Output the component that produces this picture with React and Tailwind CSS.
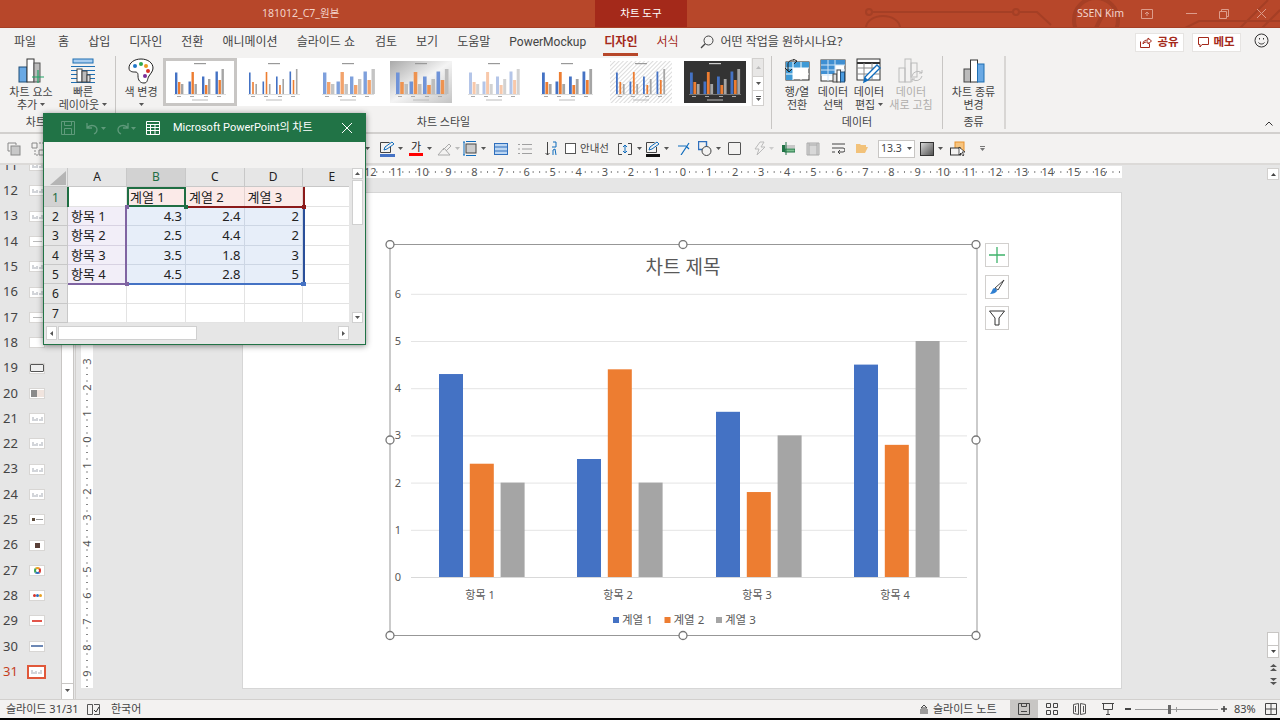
import React from 'react';

const series = [
  [4.3, 2.5, 3.5, 4.5],
  [2.4, 4.4, 1.8, 2.8],
  [2, 2, 3, 5],
];
const barColors = ['#4472c4', '#ed7d31', '#a5a5a5'];

const Caret = ({ className = '', color = '#555' }) => (
  <svg width="5" height="3" viewBox="0 0 5 3" className={`shrink-0 ${className}`}>
    <path d="M0 0h5L2.5 3z" fill={color} />
  </svg>
);

// Small chart used for every style in the gallery
const MiniChart = ({ variant }) => {
  const looks = {
    plain: { bg: '#fff', w: 2.4, colors: barColors, gap: 0 },
    thin: { bg: '#fff', w: 1.6, colors: barColors, gap: 1 },
    stack: { bg: '#fff', w: 3.4, colors: ['#7ea0dc', '#f2a36c', '#c4c4c4'], gap: 0 },
    gray: { bg: 'url(#miniGray)', w: 3.6, colors: ['#6f93d8', '#ee9350', '#bdbdbd'], gap: 0 },
    pale: { bg: '#fff', w: 3, colors: ['#b4c5e8', '#f8c8aa', '#d2d2d2'], gap: 0 },
    solid: { bg: '#fff', w: 2.8, colors: barColors, gap: 0 },
    hatch: { bg: 'url(#miniHatch)', w: 1.8, colors: barColors, gap: 1 },
    dark: { bg: '#333', w: 2.8, colors: ['#4472c4', '#ed7d31', '#a5a5a5'], gap: 0 },
  };
  const look = looks[variant];
  return (
    <svg width="62" height="42" viewBox="0 0 62 42">
      <defs>
        <linearGradient id="miniGray" x1="0" y1="0" x2="1" y2="1">
          <stop offset="0" stopColor="#a9a9a9" />
          <stop offset="0.5" stopColor="#f4f4f4" />
          <stop offset="1" stopColor="#c4c4c4" />
        </linearGradient>
        <pattern id="miniHatch" width="3" height="3" patternUnits="userSpaceOnUse" patternTransform="rotate(45)">
          <rect width="3" height="3" fill="#fff" />
          <rect width="1" height="3" fill="#dcdcdc" />
        </pattern>
      </defs>
      <rect width="62" height="42" fill={look.bg} />
      <rect x="25" y="2" width="12" height="1.2" fill={variant === 'dark' ? '#ccc' : '#999'} />
      {series.map((row, s) =>
        row.map((v, c) => (
          <rect
            key={`${s}${c}`}
            x={6 + c * 13.5 + s * (look.w + look.gap + 0.6)}
            y={33 - v * 5}
            width={look.w}
            height={v * 5}
            fill={look.colors[s]}
          />
        ))
      )}
      <rect x="5" y="33" width="52" height="0.5" fill="#bbb" />
      {[8, 21, 35, 48].map((x) => (
        <rect key={x} x={x} y="35" width="4" height="1" fill="#aaa" />
      ))}
      <rect x="23" y="38.5" width="16" height="1" fill="#bbb" />
    </svg>
  );
};

const TitleBar = () => (
  <div className="relative h-[28px] shrink-0 flex items-center bg-[#b7472a] border-b border-[#a63f25] text-[10.5px] text-[#f3d3ca] overflow-hidden">
    <svg className="absolute right-0 top-0" width="415" height="28" viewBox="865 0 415 28" fill="none" stroke="#a53f25" strokeWidth="2">
      <circle cx="869" cy="12" r="3" />
      <circle cx="1016" cy="12" r="3" />
      <path d="M872 12h141M1019 12h18l14 13M866 28a17 12 0 0 1 34 0" />
      <circle cx="1096" cy="20" r="22" strokeWidth="4" />
      <path d="M1086 12h18l-8 16" strokeWidth="4" />
      <path d="M1185 28l14-7h81M1240 28l28-28M1262 28l18-18" />
    </svg>
    <span className="ml-[262px] w-[333px] relative">181012_C7_원본</span>
    <div className="relative w-[92px] h-[27px] bg-[#a4291a] text-white flex items-center justify-center">차트 도구</div>
    <span className="relative ml-[390px] w-[64px] text-[10.5px]">SSEN Kim</span>
    <svg className="relative" width="12" height="10" viewBox="0 0 12 10" fill="none" stroke="#dd9c8b"><path d="M.5.5h11v9H.5zM6 7V3M4 5l2-2 2 2" /></svg>
    <div className="relative ml-[33px] w-[11px] h-px bg-[#dd9c8b]" />
    <svg className="relative ml-[22px]" width="10" height="10" viewBox="0 0 10 10" fill="none" stroke="#dd9c8b"><path d="M.5 2.5h7v7h-7zM2.5 2.5v-2h7v7h-2" /></svg>
    <svg className="relative ml-[28px]" width="9" height="9" viewBox="0 0 9 9" stroke="#dd9c8b"><path d="M0 0l9 9M9 0L0 9" /></svg>
  </div>
);

const TabBar = () => (
  <div className="h-[28px] shrink-0 flex items-center pl-[14px] gap-[19px] bg-[#f3f2f1] text-[12px] text-[#444] whitespace-nowrap">
    <span className="mr-[3px]">파일</span>
    <span>홈</span>
    <span>삽입</span>
    <span>디자인</span>
    <span>전환</span>
    <span>애니메이션</span>
    <span>슬라이드 쇼</span>
    <span className="ml-[1px]">검토</span>
    <span>보기</span>
    <span>도움말</span>
    <span className="w-[76px] font-['Roboto',sans-serif]">PowerMockup</span>
    <span className="relative font-bold text-[#a4291a]">
      디자인
      <span className="absolute left-[-1px] right-[-1px] bottom-[-5px] h-[3px] bg-[#b7472a]" />
    </span>
    <span className="text-[#a4291a]">서식</span>
    <div className="flex items-center gap-[7px] ml-[2px]">
      <svg width="14" height="14" viewBox="0 0 14 14" fill="none" stroke="#444"><circle cx="8.5" cy="5.5" r="4.5" /><path d="M5.2 8.8L1 13" strokeWidth="1.3" /></svg>
      <span>어떤 작업을 원하시나요?</span>
    </div>
    <div className="ml-auto mr-[39px] flex items-center gap-[8px]">
      <div className="w-[49px] h-[19px] bg-white border border-[#e6e4e2] flex items-center justify-center gap-[5px] text-[11.5px] font-bold text-[#a4291a]">
        <svg width="12" height="11" viewBox="0 0 12 11" fill="none" stroke="#a4291a"><path d="M.5 4.5v6h9v-4M3 7c0-3 2-4 5-4V1l3.5 3L8 7V5C6 5 4 5 3 7z" /></svg>
        공유
      </div>
      <div className="w-[49px] h-[19px] bg-white border border-[#e6e4e2] flex items-center justify-center gap-[4px] text-[11.5px] font-bold text-[#a4291a]">
        <svg width="11" height="11" viewBox="0 0 11 11" fill="none" stroke="#a4291a"><path d="M.5.5h10v7H4l-2 2.5v-2.5H.5z" /></svg>
        메모
      </div>
    </div>
    <svg className="absolute right-[11px] top-[33px]" width="15" height="15" viewBox="0 0 15 15" fill="none" stroke="#333"><circle cx="7.5" cy="7.5" r="6.5" /><path d="M4.5 9.5c1.5 2 4.5 2 6 0M5.5 5v1.5M9.5 5v1.5" /></svg>
  </div>
);

const ChartAddIcon = () => (
  <svg width="26" height="26" viewBox="0 0 26 26">
    <rect x="1" y="9" width="8" height="15" fill="#6aa9e4" stroke="#1f4e79" />
    <rect x="9" y="1" width="7" height="23" fill="#fff" stroke="#333" />
    <rect x="16" y="5" width="6" height="19" fill="#bbb" stroke="#555" />
    <path d="M20 12v13M14 19h12" stroke="#21a366" strokeWidth="1.2" />
  </svg>
);

const QuickLayoutIcon = () => (
  <svg width="26" height="26" viewBox="0 0 26 26">
    <rect x="3" y="1" width="20" height="4" fill="#a8cdf0" stroke="#1f6fb2" />
    <path d="M1 8.5h24M1 12.5h24M1 16.5h24M1 20.5h24M1 24.5h24" stroke="#1f6fb2" />
    <rect x="7" y="11" width="5" height="13" fill="#fff" stroke="#444" />
    <rect x="12" y="13" width="5" height="11" fill="#bbb" stroke="#444" />
    <rect x="17" y="17" width="3" height="7" fill="#ddd" stroke="#444" />
  </svg>
);

const PaletteIcon = () => (
  <svg width="26" height="26" viewBox="0 0 26 26">
    <path d="M13 1C6 1 1 5 1 10c0 4 4 4 6 4 3 0 3 2 3 4 0 4 2 7 6 7s3-4 5-7c2-3 4-5 4-8 0-5-5-9-12-9z" fill="#fff" stroke="#222" />
    <circle cx="7" cy="8" r="2" fill="#1f77c9" />
    <circle cx="13" cy="6" r="2" fill="#2fa84f" />
    <circle cx="18" cy="8" r="2" fill="#ed9a1f" />
    <circle cx="20" cy="13" r="2" fill="#d8332a" />
    <circle cx="17" cy="18" r="2" fill="#7a2f9a" />
  </svg>
);

const SwitchIcon = () => (
  <svg width="26" height="24" viewBox="0 0 26 24">
    <rect x="2" y="3" width="23" height="18" fill="#fff" stroke="#222" />
    <rect x="2" y="3" width="23" height="6" fill="#3f9ad6" />
    <rect x="2" y="3" width="7" height="18" fill="#3f9ad6" />
    <path d="M2 9h23M2 15h23M9 3v18M17 3v18" stroke="#fff" />
    <path d="M1 9l4 4 3-3M4 12V5c0-2 2-4 6-4M9 0l4 2-3 3" fill="none" stroke="#222" />
  </svg>
);

const SelectDataIcon = () => (
  <svg width="26" height="24" viewBox="0 0 26 24">
    <rect x="1" y="1" width="24" height="21" fill="#fff" stroke="#333" />
    <rect x="1" y="1" width="24" height="5" fill="#3f8fd2" />
    <rect x="1" y="1" width="14" height="14" fill="#3f8fd2" />
    <path d="M1 6h24M1 11h24M1 16h24M8 1v21M15 1v21" stroke="#cfe3f4" />
    <rect x="13" y="15" width="4" height="8" fill="#ddd" stroke="#444" />
    <rect x="17" y="11" width="3.5" height="12" fill="#fff" stroke="#444" />
    <rect x="20.5" y="13" width="4" height="10" fill="#4a9be0" stroke="#1f4e79" />
  </svg>
);

const EditDataIcon = () => (
  <svg width="26" height="26" viewBox="0 0 26 26">
    <rect x="1" y="1" width="23" height="21" fill="#fff" stroke="#333" />
    <path d="M1 5h23" stroke="#333" strokeWidth="2" />
    <path d="M1 10h23M1 16h23M8 5v17M16 5v17" stroke="#888" />
    <path d="M8 24l1-5L21 7l3 3-12 12z" fill="#fff" stroke="#0f6cbd" strokeWidth="1.4" />
    <path d="M8 24l1-5 3 3z" fill="#0f6cbd" />
  </svg>
);

const RefreshIcon = () => (
  <svg width="26" height="26" viewBox="0 0 26 26" fill="none">
    <rect x="1" y="10" width="6" height="14" stroke="#bbb" />
    <rect x="7" y="1" width="6" height="23" stroke="#bbb" />
    <rect x="13" y="5" width="6" height="14" stroke="#bbb" />
    <path d="M14 18a6 6 0 0 1 10-3M24 18a6 6 0 0 1-10 3M24 12v3h-3M14 24v-3h3" stroke="#bbb" />
  </svg>
);

const ChartTypeIcon = () => (
  <svg width="22" height="24" viewBox="0 0 22 24">
    <rect x="1" y="10" width="6.5" height="13" fill="#bbb" stroke="#444" />
    <rect x="7.5" y="1" width="7" height="22" fill="#fff" stroke="#333" />
    <rect x="14.5" y="5" width="6.5" height="18" fill="#6aa9e4" stroke="#1f6fb2" />
  </svg>
);

const RibbonBtn = ({ icon, lines, caret, muted, className = '' }) => (
  <div className={`shrink-0 flex flex-col items-center whitespace-nowrap ${muted ? 'text-[#b0aeac]' : 'text-[#444]'} ${className}`}>
    <div className="h-[28px] flex items-center justify-center">{icon}</div>
    <div className="h-[13px] leading-[13px]">{lines[0]}</div>
    <div className="h-[13px] leading-[13px] flex items-center gap-[3px]">
      {lines[1]}
      {caret && <Caret />}
    </div>
  </div>
);

const Ribbon = () => (
  <div className="relative h-[78px] shrink-0 flex bg-[#f3f2f1] border-b-2 border-[#d2d0ce] text-[11px] text-[#444]">
    <div className="w-[116px] flex flex-col border-r border-[#c8c6c4] mb-[3px]">
      <div className="h-[60px] flex pl-[6px] pt-[1px]">
        <RibbonBtn className="w-[50px]" icon={<ChartAddIcon />} lines={['차트 요소', '추가']} caret />
        <RibbonBtn className="w-[54px]" icon={<QuickLayoutIcon />} lines={['빠른', '레이아웃']} caret />
      </div>
      <div className="text-center pt-[3px]">차트 레이아웃</div>
    </div>
    <div className="w-[656px] flex flex-col border-r border-[#c8c6c4] mb-[3px]">
      <div className="h-[60px] flex">
        <RibbonBtn className="w-[46px] ml-[2px] pt-[1px]" icon={<PaletteIcon />} lines={['색 변경', '']} caret />
        <div className="flex ml-[-1px] h-[48px] mt-[2px] bg-white w-[588px] items-center">
          <div className="w-[74px] h-[48px] border-[3px] border-[#c8c6c4] flex items-center justify-center overflow-hidden"><MiniChart variant="plain" /></div>
          <div className="w-[74px] flex justify-center"><MiniChart variant="thin" /></div>
          <div className="w-[74px] flex justify-center"><MiniChart variant="stack" /></div>
          <div className="w-[72px] flex justify-center"><MiniChart variant="gray" /></div>
          <div className="w-[73px] flex justify-center"><MiniChart variant="pale" /></div>
          <div className="w-[74px] flex justify-center"><MiniChart variant="solid" /></div>
          <div className="w-[74px] flex justify-center"><MiniChart variant="hatch" /></div>
          <div className="w-[73px] flex justify-center"><MiniChart variant="dark" /></div>
        </div>
        <div className="flex flex-col w-[12px] h-[48px] mt-[2px] ml-[1px] border border-[#d2d0ce] bg-white">
          <div className="h-[17px] bg-[#e8e7e6] flex items-center justify-center"><svg width="5" height="3" viewBox="0 0 5 3"><path d="M0 3h5L2.5 0z" fill="#bbb" /></svg></div>
          <div className="h-[15px] border-y border-[#d2d0ce] flex items-center justify-center"><Caret /></div>
          <div className="flex-1 flex flex-col items-center justify-center gap-[1px]"><div className="w-[5px] h-px bg-[#555]" /><Caret /></div>
        </div>
      </div>
      <div className="text-center pt-[3px]">차트 스타일</div>
    </div>
    <div className="w-[171px] flex flex-col border-r border-[#c8c6c4] mb-[3px]">
      <div className="h-[60px] flex pl-[7px] pt-[1px]">
        <RibbonBtn className="w-[36px]" icon={<SwitchIcon />} lines={['행/열', '전환']} />
        <RibbonBtn className="w-[36px]" icon={<SelectDataIcon />} lines={['데이터', '선택']} />
        <RibbonBtn className="w-[36px]" icon={<EditDataIcon />} lines={['데이터', '편집']} caret />
        <RibbonBtn className="w-[48px]" icon={<RefreshIcon />} lines={['데이터', '새로 고침']} muted />
      </div>
      <div className="text-center pt-[3px]">데이터</div>
    </div>
    <div className="w-[63px] flex flex-col border-r-2 border-[#d8d6d4] mb-[3px]">
      <div className="h-[60px] flex pt-[1px] justify-center">
        <RibbonBtn icon={<ChartTypeIcon />} lines={['차트 종류', '변경']} />
      </div>
      <div className="text-center pt-[3px]">종류</div>
    </div>
    <svg className="absolute right-[7px] bottom-[6px]" width="8" height="5" viewBox="0 0 8 5" fill="none" stroke="#333"><path d="M.5 4.5L4 1l3.5 3.5" /></svg>
  </div>
);

const FormatBar = () => (
  <div className="h-[29px] shrink-0 flex items-center pl-[7px] bg-[#f3f2f1] text-[11px] text-[#444] whitespace-nowrap">
    <svg className="shrink-0" width="14" height="14" viewBox="0 0 14 14" fill="none" stroke="#888"><path d="M9 3V1H1v8h2" /><rect x="4" y="4" width="9" height="9" fill="#c8c8c8" /></svg>
    <svg className="shrink-0 ml-[10px]" width="14" height="14" viewBox="0 0 14 14" fill="none" stroke="#888"><path d="M1 1h5v5H1zM8 8h5v5H8z" /><path d="M4 8v5h4M8 1h5v5" strokeDasharray="2 1" /></svg>
    <Caret className="ml-[320px]" />
    <svg className="shrink-0 ml-[10px]" width="15" height="16" viewBox="0 0 15 16" fill="none"><path d="M.5 1.5h9M.5 1.5v10h10V6" stroke="#444" /><path d="M4 9l1-3 7-5 2 2-7 5z" stroke="#0f6cbd" /><rect y="13" width="15" height="3" fill="#4472c4" /></svg>
    <Caret className="ml-[3px]" />
    <div className="ml-[6px] w-[14px] flex flex-col items-center leading-[12px] text-[11px] text-[#222]">가<div className="w-[14px] h-[3px] bg-[#f00]" /></div>
    <Caret className="ml-[4px]" />
    <svg className="shrink-0 ml-[5px]" width="14" height="14" viewBox="0 0 14 14" fill="none" stroke="#aaa"><path d="M1 13h12L7 6 1 13zM6 8l6-6 2 2-5 5" /></svg>
    <Caret className="ml-[4px]" color="#bbb" />
    <svg className="shrink-0 ml-[3px]" width="15" height="15" viewBox="0 0 15 15" fill="none"><rect x="3" y="3" width="10" height="9" fill="#ccc" stroke="#444" /><path d="M1 1v13M.0 1h2M0 14h2M3 .5h10M3 14.5h10" stroke="#0f6cbd" /></svg>
    <Caret className="ml-[3px]" />
    <svg className="shrink-0 ml-[8px]" width="14" height="12" viewBox="0 0 14 12"><rect x=".5" y=".5" width="13" height="11" fill="#bcd6f2" stroke="#2f6fbd" /><path d="M1 4h12M1 8h12" stroke="#2f6fbd" /></svg>
    <svg className="shrink-0 ml-[10px]" width="14" height="12" viewBox="0 0 14 12" stroke="#a0a0a0"><path d="M0 1.5h2M4 1.5h10M0 6h2M4 6h10M0 10.5h2M4 10.5h10" /></svg>
    <svg className="shrink-0 ml-[13px]" width="12" height="15" viewBox="0 0 12 15" fill="none" stroke="#444"><path d="M2.5 1v13M.5 12l2 2 2-2" /><path d="M8 1h3v5H7M8 14V9l2-1 1 6" stroke="#0f6cbd" /></svg>
    <div className="shrink-0 ml-[8px] w-[11px] h-[11px] bg-white border border-[#555]" />
    <span className="ml-[4px] w-[30px] text-[10.5px]">안내선</span>
    <svg className="shrink-0 ml-[8px]" width="14" height="12" viewBox="0 0 14 12" fill="none" stroke="#444"><path d="M4 .5H.5v11H4M10 .5h3.5v11H10" /><path d="M7 2v8M5 4l2-2 2 2M5 8l2 2 2-2" stroke="#0f6cbd" /></svg>
    <Caret className="ml-[5px]" />
    <svg className="shrink-0 ml-[4px]" width="14" height="16" viewBox="0 0 14 16" fill="none"><path d="M.5 1.5h8M.5 1.5v10h10V6" stroke="#444" /><path d="M3 9l1-3 7-5 2 2-7 5z" stroke="#0f6cbd" /><rect y="13" width="14" height="3" fill="#111" /></svg>
    <Caret className="ml-[4px]" />
    <svg className="shrink-0 ml-[8px]" width="13" height="13" viewBox="0 0 13 13" fill="none" stroke="#0f6cbd" strokeWidth="1.2"><path d="M1 4h8M4 13l8-12M9 4l3 3" /></svg>
    <svg className="shrink-0 ml-[8px]" width="14" height="15" viewBox="0 0 14 15" fill="none"><path d="M.5.5h8v8h-8z" stroke="#2f6fbd" strokeWidth="1.4" /><circle cx="8.5" cy="10" r="4.5" fill="#f3f2f1" stroke="#444" /></svg>
    <Caret className="ml-[4px]" />
    <div className="shrink-0 ml-[7px] w-[13px] h-[13px] border-[1.5px] border-[#555] rounded-[1px]" />
    <svg className="shrink-0 ml-[12px]" width="14" height="15" viewBox="0 0 14 15" fill="none" stroke="#bbb"><path d="M7 1L2 8h4l-2 6 8-8H8l3-5z" /></svg>
    <Caret className="ml-[2px]" color="#ccc" />
    <svg className="shrink-0 ml-[7px]" width="14" height="13" viewBox="0 0 14 13"><rect x="1" y="3" width="3" height="7" fill="#217346" /><rect x="4" y="3" width="10" height="3" fill="#c8c8c8" /><rect x="4" y="7" width="10" height="3" fill="#7cc08f" stroke="#217346" /><path d="M5 0v13" stroke="#217346" /></svg>
    <svg className="shrink-0 ml-[11px]" width="14" height="14" viewBox="0 0 14 14" fill="#d8d8d8" stroke="#aaa"><path d="M1 1h12v12H1z" /><path d="M3 1v12M11 1v12M3 3h8" /></svg>
    <svg className="shrink-0 ml-[12px]" width="13" height="11" viewBox="0 0 13 11" fill="none" stroke="#444"><path d="M0 1h13M0 5h11a2 2 0 0 1 0 4H6M8 7L6 9l2 2M0 9h3" /></svg>
    <svg className="shrink-0 ml-[11px]" width="12" height="9" viewBox="0 0 12 9"><path d="M0 9V0h4l1 1h5v2H3L0 9zM3 3h9l-3 6H0z" fill="#f2c27a" /></svg>
    <div className="ml-[10px] w-[37px] h-[18px] bg-white border border-[#c8c6c4] flex items-center justify-between px-[2px] text-[10.5px]">13.3<Caret /></div>
    <div className="shrink-0 ml-[5px] w-[14px] h-[14px] border border-[#333] bg-gradient-to-br from-[#d8d8d8] to-[#555]" />
    <Caret className="ml-[4px]" />
    <svg className="shrink-0 ml-[7px]" width="16" height="16" viewBox="0 0 16 16" fill="none"><rect x="5" y="1" width="9" height="9" fill="#f7c47e" stroke="#e8912c" /><rect x=".5" y="7" width="10" height="7" fill="#f3f2f1" stroke="#333" /><path d="M9 6l0 8 2-2 2 3 1-1-2-3h3z" fill="#fff" stroke="#111" strokeWidth=".7" /></svg>
    <svg className="shrink-0 ml-[14px]" width="5" height="5" viewBox="0 0 5 5"><path d="M0 0h5v1H0zM0 2h5L2.5 5z" fill="#777" /></svg>
  </div>
);

const thumbs = [
  { n: 11, mark: 'bars' }, { n: 12, mark: 'bars' }, { n: 13, mark: 'bars' }, { n: 14, mark: 'line' },
  { n: 15, mark: 'bars' }, { n: 16, mark: 'bars' }, { n: 17, mark: 'line' }, { n: 18, mark: 'none' },
  { n: 19, mark: 'frame' }, { n: 20, mark: 'gray' }, { n: 21, mark: 'bars' }, { n: 22, mark: 'bars' },
  { n: 23, mark: 'bars' }, { n: 24, mark: 'bars' }, { n: 25, mark: 'dash' }, { n: 26, mark: 'dark' },
  { n: 27, mark: 'ring' }, { n: 28, mark: 'dots' }, { n: 29, mark: 'red' }, { n: 30, mark: 'blue' },
  { n: 31, mark: 'bars', active: true },
];

const ThumbMark = ({ mark }) => {
  if (mark === 'bars') return <svg width="11" height="5" viewBox="0 0 11 5"><path d="M1 1v4M3 3v2M5 2v3M8 3v2M10 1v4" stroke="#a6abb4" /></svg>;
  if (mark === 'line') return <div className="w-[9px] h-px bg-[#bbb]" />;
  if (mark === 'frame') return <div className="w-[14px] h-[8px] border border-[#555] rounded-[1px] bg-[#eee]" />;
  if (mark === 'gray') return <div className="w-[13px] h-[7px] flex"><div className="w-[6px] bg-[#8a8a8a]" /><div className="w-[7px] bg-[#f0e4de]" /></div>;
  if (mark === 'dash') return <div className="flex items-center gap-[1px]"><div className="w-[3px] h-[3px] bg-[#5c4a3a]" /><div className="w-[7px] h-px bg-[#999]" /></div>;
  if (mark === 'dark') return <div className="w-[5px] h-[5px] bg-[#5a4038]" />;
  if (mark === 'ring') return <div className="w-[7px] h-[7px] rounded-full border-2 border-t-[#e8a020] border-r-[#d8342a] border-b-[#2f6fbd] border-l-[#3aa655]" />;
  if (mark === 'dots') return <div className="flex"><div className="w-[3px] h-[3px] rounded-full bg-[#d8342a]" /><div className="w-[3px] h-[3px] rounded-full bg-[#2f6fbd]" /><div className="w-[3px] h-[3px] rounded-full bg-[#e8a020]" /></div>;
  if (mark === 'red') return <div className="w-[10px] h-[2px] bg-[#e2554a]" />;
  if (mark === 'blue') return <div className="w-[12px] h-[2px] bg-[#6d88b5]" />;
  return null;
};

const ThumbPanel = () => (
  <div className="w-[76px] shrink-0 flex border-r border-[#d2d0ce] overflow-hidden">
    <div className="w-[61px] shrink-0 -mt-[12px] flex flex-col text-[13px] text-[#444]">
      {thumbs.map((t) => (
        <div key={t.n} className="h-[25.3px] shrink-0 flex items-center pl-[3px]">
          <span className={`w-[24px] ${t.active ? 'text-[#c43e1c]' : ''}`}>{t.n}</span>
          {t.active ? (
            <div className="w-[19px] h-[14px] border-2 border-[#e0583a] bg-white flex items-center justify-center"><ThumbMark mark={t.mark} /></div>
          ) : (
            <div className="ml-[2px] w-[16px] h-[11px] bg-white border border-[#d8d6d4] flex items-center justify-center"><ThumbMark mark={t.mark} /></div>
          )}
        </div>
      ))}
    </div>
    <div className="w-[13px] shrink-0 flex flex-col pt-[3px] pb-[3px] border-x border-[#c8c6c4] bg-white">
      <div className="flex-1" />
      <div className="h-[13px] border-t border-[#c8c6c4] flex items-center justify-center"><Caret /></div>
    </div>
  </div>
);

// numbers further left sit behind the chart data window
const rulerNums = [-12, -11, -10, -9, -8, -7, -6, -5, -4, -3, -2, -1, 0, 1, 2, 3, 4, 5, 6, 7, 8, 9, 10, 11, 12, 13, 14, 15, 16];

const HRuler = () => (
  <svg width="880" height="12" viewBox="242 0 880 12" className="block">
    <rect x="242" width="880" height="12" fill="#fff" />
    {rulerNums.map((n) => {
      const x = 683 + n * 26.06;
      return (
        <g key={n}>
          <text x={x} y="10" fontSize="11" fill="#555" textAnchor="middle">{Math.abs(n)}</text>
          <path d={`M${x + 6.5} 5v2M${x + 13} 5v2M${x + 19.5} 5v2`} stroke="#888" />
        </g>
      );
    })}
  </svg>
);

const VRuler = () => (
  <svg width="12" height="496" viewBox="0 192 12 496" className="block">
    <rect y="192" width="12" height="496" fill="#fff" />
    {[-3, -2, -1, 0, 1, 2, 3, 4, 5, 6, 7, 8, 9].map((n) => {
      const y = 439.5 + n * 26;
      return (
        <g key={n}>
          <text transform={`translate(10 ${y}) rotate(-90)`} fontSize="11" fill="#555" textAnchor="middle">{Math.abs(n)}</text>
          <path d={`M5 ${y + 6.5}h2M5 ${y + 13}h2M5 ${y + 19.5}h2`} stroke="#888" />
        </g>
      );
    })}
  </svg>
);

const Handle = ({ x, y }) => <circle cx={x} cy={y} r="4" fill="#fff" stroke="#777" strokeWidth="1.3" />;

const ChartDrawing = () => {
  const groupX = [439, 577, 716, 854];
  const y0 = 577;
  const unit = 47.2;
  return (
    <svg width="600" height="404" viewBox="385 240 600 404" className="shrink-0 block">
      <rect x="390" y="244.5" width="587" height="391" fill="#fff" stroke="#979797" />
      <text x="683" y="273.5" fontSize="19" fill="#595959" textAnchor="middle">차트 제목</text>
      {[0, 1, 2, 3, 4, 5, 6].map((v) => (
        <g key={v}>
          <path d={`M411 ${y0 - v * unit + 0.5}H967`} stroke={v === 0 ? '#d9d9d9' : '#e4e4e4'} />
          <text x="398" y={y0 - v * unit + 4} fontSize="11" fill="#595959" textAnchor="middle">{v}</text>
        </g>
      ))}
      {groupX.map((gx, c) =>
        series.map((row, s) => (
          <rect key={`${c}${s}`} x={gx + s * 30.8} y={y0 - row[c] * unit} width="24" height={row[c] * unit} fill={barColors[s]} />
        ))
      )}
      {[1, 2, 3, 4].map((n, i) => (
        <text key={n} x={groupX[i] + 41} y="599" fontSize="11" fill="#595959" textAnchor="middle">{`항목 ${n}`}</text>
      ))}
      {[1, 2, 3].map((n, i) => (
        <g key={n}>
          <rect x={613 + i * 51.5} y="617" width="6" height="6" fill={barColors[i]} />
          <text x={622 + i * 51.5} y="624" fontSize="11.5" fill="#595959">{`계열 ${n}`}</text>
        </g>
      ))}
      <Handle x={390} y={244.5} />
      <Handle x={683} y={244.5} />
      <Handle x={976} y={244.5} />
      <Handle x={390} y={440} />
      <Handle x={976} y={440} />
      <Handle x={390} y={635.5} />
      <Handle x={683} y={635.5} />
      <Handle x={976} y={635.5} />
    </svg>
  );
};

const ChartButtons = () => (
  <div className="mt-[3px] flex flex-col gap-[7.5px]">
    <div className="w-[24px] h-[24px] bg-white border border-[#d2d0ce] flex items-center justify-center">
      <svg width="16" height="16" viewBox="0 0 16 16" stroke="#3fb36b" strokeWidth="1.3"><path d="M8 0v16M0 8h16" /></svg>
    </div>
    <div className="w-[24px] h-[24px] bg-white border border-[#d2d0ce] flex items-center justify-center">
      <svg width="16" height="16" viewBox="0 0 16 16"><path d="M6 9L15 1l-6 10z" fill="#fff" stroke="#444" /><path d="M1 15c3 0 6-1 7-3 0-2-2-3-3-3-2 1-2 4-4 6z" fill="#2f7fd1" /></svg>
    </div>
    <div className="w-[24px] h-[24px] bg-white border border-[#d2d0ce] flex items-center justify-center">
      <svg width="16" height="16" viewBox="0 0 16 16" fill="none" stroke="#333"><path d="M.5 1h15L10 8v7H6V8z" /></svg>
    </div>
  </div>
);

const RightScroll = () => (
  <div className="w-[158px] shrink-0 flex justify-end pr-[1px]">
    <div className="w-[12px] flex flex-col items-center pt-[3px] pb-[14px]">
      <div className="w-[12px] h-[12px] bg-white border border-[#d2d0ce] flex items-center justify-center"><svg width="5" height="3" viewBox="0 0 5 3"><path d="M0 3h5L2.5 0z" fill="#444" /></svg></div>
      <div className="flex-1" />
      <div className="w-[12px] h-[14px] bg-white border border-[#c8c6c4]" />
      <div className="w-[12px] h-[12px] bg-white border border-t-0 border-[#c8c6c4] flex items-center justify-center"><Caret color="#444" /></div>
      <svg className="mt-[6px]" width="7" height="7" viewBox="0 0 7 7"><path d="M0 3l3.5-3L7 3zM0 7l3.5-3L7 7z" fill="#555" /></svg>
      <svg className="mt-[7px]" width="7" height="7" viewBox="0 0 7 7"><path d="M0 0l3.5 3L7 0zM0 4l3.5 3L7 4z" fill="#555" /></svg>
    </div>
  </div>
);

const Editor = () => (
  <div className="flex-1 min-h-0 flex bg-[#e6e6e6] border-t-2 border-[#dcdad8]">
    <ThumbPanel />
    <div className="w-[166px] shrink-0 pl-[5px] pt-[27px]">
      <VRuler />
    </div>
    <div className="w-[880px] shrink-0 flex flex-col pt-[1px]">
      <HRuler />
      <div className="mt-[14px] h-[497px] bg-white border border-[#d6d6d6] flex items-start pl-[142px] pt-[47px]">
        <ChartDrawing />
        <ChartButtons />
      </div>
    </div>
    <RightScroll />
  </div>
);

const StatusBar = () => (
  <div className="h-[19px] shrink-0 flex items-center bg-[#f3f2f1] border-t border-[#d2d0ce] text-[11px] text-[#444] whitespace-nowrap">
    <span className="ml-[6px] w-[81px]">슬라이드 31/31</span>
    <svg className="shrink-0" width="13" height="11" viewBox="0 0 13 11" fill="none" stroke="#555"><path d="M.5.5h5v10h-5zM7 .5h5.5v10H7" /><path d="M7 6l2 2 3-5" stroke="#333" /></svg>
    <span className="ml-[11px]">한국어</span>
    <div className="ml-auto flex items-center h-full">
      <svg className="shrink-0" width="8" height="9" viewBox="0 0 8 9" fill="none" stroke="#444"><path d="M0 5h8M0 7h8M0 9h8M4 0l3 3H1z" /></svg>
      <span className="ml-[5px] w-[77px]">슬라이드 노트</span>
      <div className="w-[28px] h-[18px] bg-[#c8c6c4] flex items-center justify-center">
        <svg width="12" height="12" viewBox="0 0 12 12" fill="none" stroke="#444"><path d="M.5.5h11v11H.5zM3.5.5v3h5v-3M3 8.5h6" /></svg>
      </div>
      <svg className="shrink-0 ml-[8px]" width="12" height="12" viewBox="0 0 12 12" fill="none" stroke="#444"><path d="M.5.5h4v4h-4zM7.5.5h4v4h-4zM.5 7.5h4v4h-4zM7.5 7.5h4v4h-4z" /></svg>
      <svg className="shrink-0 ml-[15px]" width="13" height="12" viewBox="0 0 13 12" fill="none" stroke="#555"><path d="M.5 1.5l5-1v11l-5-1zM12.5 1.5l-5-1v11l5-1zM2.5 3v6M10.5 3v6" /></svg>
      <svg className="shrink-0 ml-[16px]" width="12" height="12" viewBox="0 0 12 12" fill="none" stroke="#444"><path d="M0 .5h12M1.5.5v6h9v-6M6 6.5V11M4 11.5h4" /></svg>
      <div className="ml-[11px] w-[6px] h-[2px] bg-[#444]" />
      <div className="relative ml-[4px] w-[83px] h-px bg-[#9a9a9a]">
        <div className="absolute left-[33px] top-[-4px] w-[3px] h-[9px] bg-[#666]" />
        <div className="absolute left-[41px] top-[-2px] w-px h-[5px] bg-[#9a9a9a]" />
      </div>
      <svg className="shrink-0 ml-[3px]" width="6" height="6" viewBox="0 0 6 6" stroke="#444" strokeWidth="1.6"><path d="M3 0v6M0 3h6" /></svg>
      <span className="ml-[7px] w-[31px]">83%</span>
      <svg className="shrink-0 mr-[3px]" width="12" height="12" viewBox="0 0 12 12" fill="none" stroke="#444"><path d="M.5.5h11v11H.5zM6 .5v11M.5 6h11" /></svg>
    </div>
  </div>
);

const sheetCols = ['A', 'B', 'C', 'D', 'E'];
const sheetRows = [
  ['', '계열 1', '계열 2', '계열 3', ''],
  ['항목 1', '4.3', '2.4', '2', ''],
  ['항목 2', '2.5', '4.4', '2', ''],
  ['항목 3', '3.5', '1.8', '3', ''],
  ['항목 4', '4.5', '2.8', '5', ''],
  ['', '', '', '', ''],
  ['', '', '', '', ''],
];

const cellClass = (r, c) => {
  if (r === 0 && c >= 1 && c <= 3) return 'bg-[#fbeae8] border-[#e2d2d0]';
  if (r >= 1 && r <= 4 && c === 0) return 'bg-[#f2eef8] border-[#d8d2e2]';
  if (r >= 1 && r <= 4 && c >= 1 && c <= 3) return 'bg-[#e7eef9] border-[#cdd6e4]';
  return 'bg-white border-[#e3e3e3]';
};

const ExcelWindow = () => (
  <div className="absolute left-[43px] top-[113px] w-[323px] h-[232px] flex flex-col bg-[#e6e6e6] border border-[#217346] shadow-[0_1px_6px_rgba(0,0,0,0.45)] z-10">
    <div className="h-[28px] shrink-0 flex items-center bg-[#217346] text-[11px] text-white whitespace-nowrap">
      <svg className="ml-[17px] shrink-0" width="14" height="14" viewBox="0 0 14 14" fill="none" stroke="#5f9a7b"><path d="M.5.5h13v13H.5zM3.5.5v4h7v-4M3.5 13.5v-6h7v6" /></svg>
      <svg className="ml-[11px] shrink-0" width="13" height="13" viewBox="0 0 13 13" fill="none" stroke="#5f9a7b" strokeWidth="1.3"><path d="M1 1v5h5M1 6c3-4 10-3 10 2 0 2-1 3-3 4" /></svg>
      <Caret className="ml-[2px]" color="#5f9a7b" />
      <svg className="ml-[10px] shrink-0" width="13" height="13" viewBox="0 0 13 13" fill="none" stroke="#5f9a7b" strokeWidth="1.3"><path d="M12 1v5H7M12 6C9 2 2 3 2 8c0 2 1 3 3 4" /></svg>
      <Caret className="ml-[2px]" color="#5f9a7b" />
      <svg className="ml-[10px] shrink-0" width="14" height="14" viewBox="0 0 14 14" fill="none" stroke="#fff"><path d="M.5.5h13v13H.5zM.5 3.5h13M.5 6.5h13M.5 9.5h13M4.5 3.5v10M9 3.5v10" /></svg>
      <span className="ml-[13px] font-['Roboto','Noto_Sans_CJK_KR',sans-serif]">Microsoft PowerPoint의 차트</span>
      <svg className="ml-auto mr-[13px] shrink-0" width="10" height="10" viewBox="0 0 10 10" stroke="#fff"><path d="M0 0l10 10M10 0L0 10" /></svg>
    </div>
    <div className="h-[26px] shrink-0 bg-[#f3f2f1]" />
    <div className="flex-1 min-h-0 flex">
      <div className="relative w-[305px] shrink-0 h-[155px] overflow-hidden grid grid-cols-[24px_59px_59px_58.5px_58.5px_58.5px] grid-rows-[19px_20px_19px_19.5px_19.5px_19px_19.5px_19.5px] text-[13px] text-[#222] leading-none">
        <div className="bg-[#e6e6e6] border-r border-b border-[#c8c8c8] overflow-hidden">
          <svg width="24" height="19" viewBox="0 0 24 19"><path d="M22 3v14H6z" fill="#b5b5b5" /></svg>
        </div>
        {sheetCols.map((col) => (
          <div key={col} className={`flex items-center justify-center text-[12px] border-r border-b border-[#c8c8c8] ${col === 'B' ? 'bg-[#d2d2d2] text-[#1f6e43]' : 'bg-[#e6e6e6]'}`}>{col}</div>
        ))}
        {sheetRows.map((row, r) => (
          <React.Fragment key={r}>
            <div className={`flex items-center justify-center pt-[2px] text-[12px] border-r border-b border-[#c8c8c8] ${r === 0 ? 'bg-[#d2d2d2] text-[#1f6e43]' : 'bg-[#e6e6e6]'}`}>{r + 1}</div>
            {row.map((val, c) => (
              <div key={c} className={`flex items-center pt-[1px] border-r border-b px-[3px] ${cellClass(r, c)} ${r > 0 && c > 0 ? 'justify-end' : ''}`}>{val}</div>
            ))}
          </React.Fragment>
        ))}
        {/* range highlights that sit on top of the cells */}
        <div className="absolute left-[23px] top-[19px] w-[2px] h-[20px] bg-[#1f6e43]" />
        <div className="absolute left-[83px] top-[19px] w-[59px] h-[20px] border-2 border-[#1f6e43]" />
        <div className="absolute left-[142px] top-[38px] w-[118px] h-[2px] bg-[#8b1a1a]" />
        <div className="absolute left-[259px] top-[19px] w-[2px] h-[20px] bg-[#8b1a1a]" />
        <div className="absolute left-[24px] top-[39px] w-[59px] h-[78px] border-b-2 border-r-2 border-[#8064a2]" />
        <div className="absolute left-[83px] top-[115px] w-[177px] h-[2px] bg-[#4472c4]" />
        <div className="absolute left-[259px] top-[39px] w-[2px] h-[78px] bg-[#2a4f9a]" />
        <div className="absolute left-[140px] top-[37px] w-[4px] h-[4px] bg-[#1f6e43]" />
        <div className="absolute left-[81px] top-[37px] w-[4px] h-[4px] bg-[#8064a2]" />
        <div className="absolute left-[81px] top-[114px] w-[4px] h-[4px] bg-[#8064a2]" />
        <div className="absolute left-[258px] top-[37px] w-[4px] h-[4px] bg-[#8b1a1a]" />
        <div className="absolute left-[257px] top-[114px] w-[5px] h-[4px] bg-[#4472c4]" />
      </div>
      <div className="ml-[3px] w-[11px] h-[155px] shrink-0 flex flex-col bg-[#e6e6e6]">
        <div className="h-[11px] bg-white border border-[#d0d0d0] flex items-center justify-center"><svg width="5" height="3" viewBox="0 0 5 3"><path d="M0 3h5L2.5 0z" fill="#555" /></svg></div>
        <div className="mt-[1px] h-[45px] bg-white border border-[#d0d0d0]" />
        <div className="flex-1" />
        <div className="h-[11px] bg-white border border-[#d0d0d0] flex items-center justify-center"><Caret /></div>
      </div>
    </div>
    <div className="h-[20px] shrink-0 flex items-start pl-[2px] pt-[2px]">
      <div className="w-[11px] h-[14px] bg-white border border-[#d0d0d0] flex items-center justify-center"><svg width="3" height="5" viewBox="0 0 3 5"><path d="M3 0v5L0 2.5z" fill="#555" /></svg></div>
      <div className="ml-[1px] w-[139px] h-[14px] bg-white border border-[#d0d0d0]" />
      <div className="ml-[141px] w-[11px] h-[14px] bg-white border border-[#d0d0d0] flex items-center justify-center"><svg width="3" height="5" viewBox="0 0 3 5"><path d="M0 0v5l3-2.5z" fill="#555" /></svg></div>
    </div>
  </div>
);

export default function App() {
  return (
    <div className="relative w-[1280px] h-[720px] overflow-hidden flex flex-col bg-black font-['Noto_Sans','Noto_Sans_CJK_KR',sans-serif]">
      <TitleBar />
      <TabBar />
      <Ribbon />
      <FormatBar />
      <Editor />
      <StatusBar />
      <div className="h-[2px] shrink-0 bg-black" />
      <ExcelWindow />
    </div>
  );
}
